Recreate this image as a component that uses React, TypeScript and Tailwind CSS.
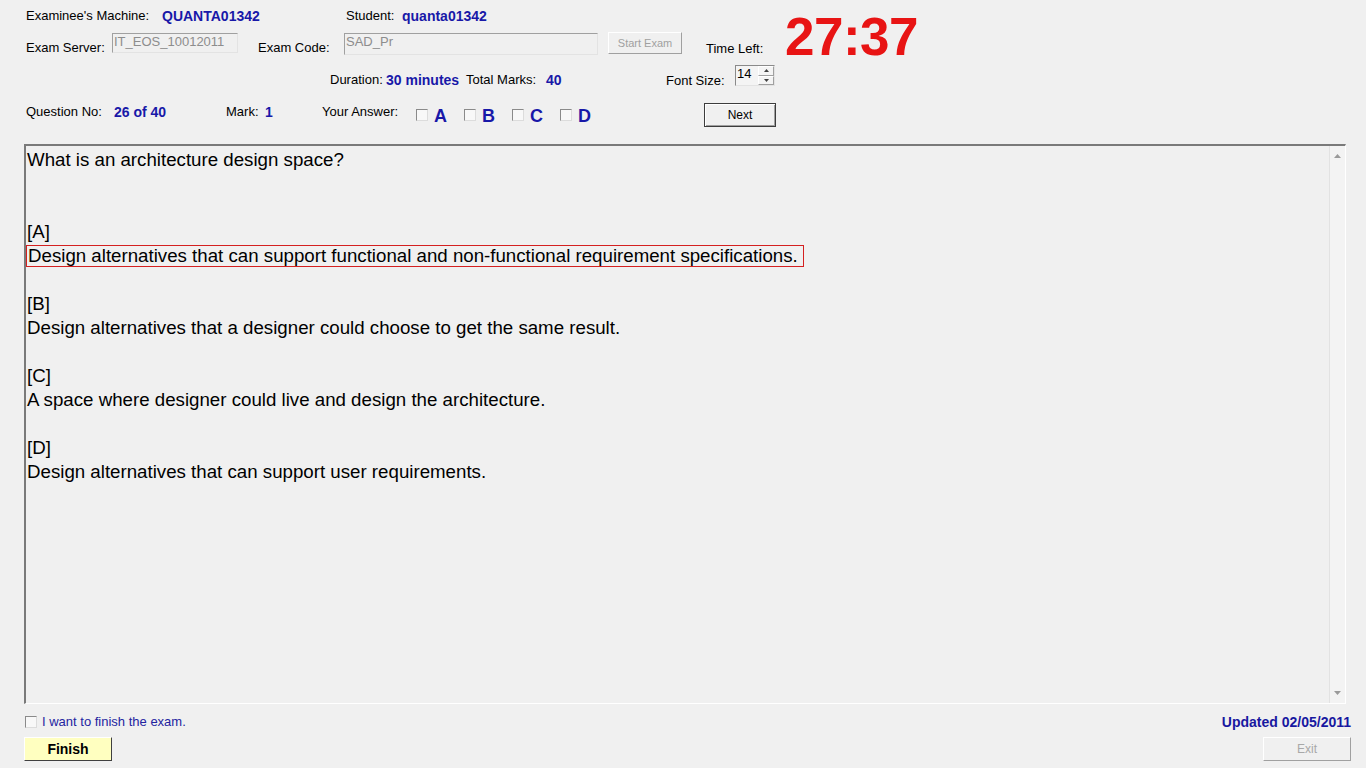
import React from 'react';

const blue = 'text-[#1818a8]';

const Label = ({ children, w, className = '' }: { children: React.ReactNode; w: string; className?: string }) => (
  <span className={`${w} shrink-0 text-[13px] leading-[16px] text-black whitespace-nowrap ${className}`}>{children}</span>
);

const Value = ({ children, w, className = '' }: { children: React.ReactNode; w: string; className?: string }) => (
  <span className={`${w} shrink-0 text-[14px] leading-[16px] font-bold ${blue} whitespace-nowrap ${className}`}>{children}</span>
);

const CheckBox = ({ className = '' }: { className?: string }) => (
  <span className={`block w-[12px] h-[12px] shrink-0 border border-t-[#8a8a8a] border-l-[#8a8a8a] border-r-[#dcdcdc] border-b-[#dcdcdc] bg-[#f8f8f8] ${className}`} />
);

const Answer = ({ letter }: { letter: string }) => (
  <div className="w-[48px] shrink-0 flex items-start">
    <CheckBox className="mt-[9px]" />
    <span className={`ml-[6px] mt-[6px] text-[18px] leading-[20px] font-bold ${blue}`}>{letter}</span>
  </div>
);

const lines: { text: string; boxed?: boolean }[] = [
  { text: 'What is an architecture design space?' },
  { text: '' },
  { text: '' },
  { text: '[A]' },
  { text: 'Design alternatives that can support functional and non-functional requirement specifications.', boxed: true },
  { text: '' },
  { text: '[B]' },
  { text: 'Design alternatives that a designer could choose to get the same result.' },
  { text: '' },
  { text: '[C]' },
  { text: 'A space where designer could live and design the architecture.' },
  { text: '' },
  { text: '[D]' },
  { text: 'Design alternatives that can support user requirements.' },
];

export default function App() {
  return (
    <div className="w-[1366px] h-[768px] bg-[#f0f0f0] overflow-hidden font-['Liberation_Sans',Arial,sans-serif] text-black">
      {/* header rows 1-2 with timer */}
      <div className="h-[64px] flex items-start">
        <div className="w-[785px] shrink-0 pl-[26px]">
          <div className="mt-[8px] h-[16px] flex items-center">
            <Label w="w-[136px]">Examinee's Machine:</Label>
            <Value w="w-[184px]">QUANTA01342</Value>
            <Label w="w-[56px]">Student:</Label>
            <Value w="w-[120px]">quanta01342</Value>
          </div>
          <div className="mt-[8px] h-[24px] flex items-start">
            <Label w="w-[86px]" className="mt-[8px]">Exam Server:</Label>
            <div className="w-[126px] h-[20px] mt-[1px] shrink-0 border border-t-[#a0a0a0] border-l-[#a0a0a0] border-r-[#e3e3e3] border-b-[#e3e3e3] pl-[1px] text-[13px] leading-[16px] text-[#8d8d8d]">
              IT_EOS_10012011
            </div>
            <Label w="w-[86px]" className="ml-[20px] mt-[8px]">Exam Code:</Label>
            <div className="w-[254px] h-[22px] mt-[1px] shrink-0 border border-t-[#a0a0a0] border-l-[#a0a0a0] border-r-[#e3e3e3] border-b-[#e3e3e3] pl-[1px] text-[13px] leading-[16px] text-[#8d8d8d]">
              SAD_Pr
            </div>
            <div className="ml-[10px] w-[74px] h-[22px] shrink-0 flex items-center justify-center border border-t-[#ffffff] border-l-[#ffffff] border-r-[#a0a0a0] border-b-[#a0a0a0] text-[11px] text-[#a0a0a0]">
              Start Exam
            </div>
            <Label w="w-[70px]" className="ml-[24px] mt-[9px]">Time Left:</Label>
          </div>
        </div>
        <div className="mt-[10px] text-[53px] leading-none font-bold text-[#e81414] tracking-[-0.5px]">27:37</div>
      </div>

      {/* row 3 */}
      <div className="h-[36px] flex items-start pl-[330px]">
        <Label w="w-[56px]" className="mt-[8px]">Duration:</Label>
        <Value w="w-[80px]" className="mt-[8px]">30 minutes</Value>
        <Label w="w-[80px]" className="mt-[8px]">Total Marks:</Label>
        <Value w="w-[120px]" className="mt-[8px]">40</Value>
        <Label w="w-[69px]" className="mt-[9px]">Font Size:</Label>
        <div className="w-[40px] h-[21px] mt-[1px] shrink-0 flex border border-t-[#8a8a8a] border-l-[#8a8a8a] border-r-[#e3e3e3] border-b-[#e3e3e3] bg-[#f4f4f4]">
          <span className="flex-1 pl-[1px] text-[13px] leading-[15px]">14</span>
          <div className="w-[16px] flex flex-col">
            <div className="flex-1 flex items-center justify-center border border-t-white border-l-white border-r-[#a0a0a0] border-b-[#a0a0a0]">
              <svg width="5" height="3" viewBox="0 0 5 3"><path d="M2.5 0L5 3H0z" fill="#404040" /></svg>
            </div>
            <div className="flex-1 flex items-center justify-center border border-t-white border-l-white border-r-[#a0a0a0] border-b-[#a0a0a0]">
              <svg width="5" height="3" viewBox="0 0 5 3"><path d="M0 0H5L2.5 3z" fill="#404040" /></svg>
            </div>
          </div>
        </div>
      </div>

      {/* row 4 */}
      <div className="h-[44px] flex items-start pl-[26px]">
        <Label w="w-[88px]" className="mt-[4px]">Question No:</Label>
        <Value w="w-[112px]" className="mt-[4px]">26 of 40</Value>
        <Label w="w-[39px]" className="mt-[4px]">Mark:</Label>
        <Value w="w-[57px]" className="mt-[4px]">1</Value>
        <Label w="w-[94px]" className="mt-[4px]">Your Answer:</Label>
        <Answer letter="A" />
        <Answer letter="B" />
        <Answer letter="C" />
        <Answer letter="D" />
        <div className="ml-[96px] mt-[3px] w-[72px] h-[24px] shrink-0 flex items-center justify-center border border-[#3c3c3c] bg-[#f0f0f0] shadow-[inset_1px_1px_0_#ffffff,inset_-1px_-1px_0_#a0a0a0] text-[12px]">
          Next
        </div>
      </div>

      {/* question box */}
      <div className="ml-[24px] w-[1322px] h-[560px] flex border-t-2 border-l-2 border-t-[#7a7a7a] border-l-[#7a7a7a] border-r border-b border-r-[#ffffff] border-b-[#ffffff]">
        <div className="flex-1 pt-[2px] pl-[1px] text-[18.7px] leading-[24px]">
          {lines.map((l, i) =>
            l.boxed ? (
              <div key={i} className="h-[24px] flex items-center -ml-[1px]">
                <span className="inline-block border border-[#d42020] pl-[1px] pr-[5px] leading-[20px]">{l.text}</span>
              </div>
            ) : (
              <div key={i} className="h-[24px] whitespace-nowrap">{l.text || '\u00a0'}</div>
            )
          )}
        </div>
        <div className="w-[16px] shrink-0 flex flex-col justify-between border-l border-l-[#e2e2e2] bg-[#f3f3f3] py-[8px]">
          <div className="flex justify-center">
            <svg width="7" height="4" viewBox="0 0 7 4"><path d="M3.5 0L7 4H0z" fill="#9a9a9a" /></svg>
          </div>
          <div className="flex justify-center">
            <svg width="7" height="4" viewBox="0 0 7 4"><path d="M0 0H7L3.5 4z" fill="#9a9a9a" /></svg>
          </div>
        </div>
      </div>

      {/* footer */}
      <div className="mt-[6px] h-[24px] flex items-center pl-[25px] pr-[15px]">
        <CheckBox />
        <span className="ml-[5px] text-[13px] text-[#2424a0]">I want to finish the exam.</span>
        <span className="ml-auto text-[14px] font-bold text-[#1818a0]">Updated 02/05/2011</span>
      </div>
      <div className="mt-[3px] flex items-start pl-[24px] pr-[15px]">
        <div className="w-[88px] h-[24px] flex items-center justify-center bg-[#ffffc0] border border-t-[#ffffff] border-l-[#ffffff] border-r-[#404040] border-b-[#404040] text-[14px] font-bold">
          Finish
        </div>
        <div className="ml-auto w-[88px] h-[24px] flex items-center justify-center border border-t-[#ffffff] border-l-[#ffffff] border-r-[#a0a0a0] border-b-[#a0a0a0] text-[12px] text-[#a8a8a8]">
          Exit
        </div>
      </div>
    </div>
  );
}
